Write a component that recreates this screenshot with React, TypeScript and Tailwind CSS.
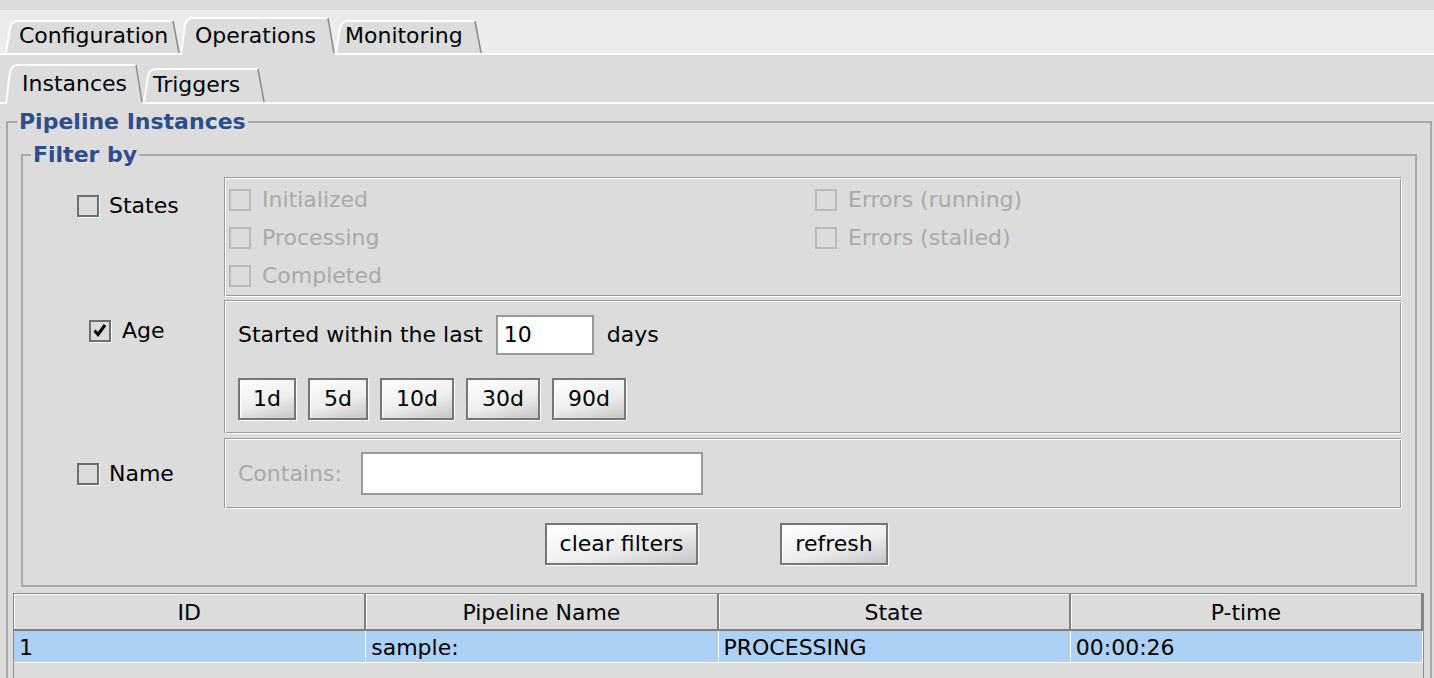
import clsx from 'clsx'

const BOX =
	'border border-t-[#9b9b9b] border-l-[#9b9b9b] border-b-white border-r-white shadow-[inset_1px_1px_0_#fff,inset_-1px_-1px_0_#9b9b9b]'

function Tab({
	label,
	w,
	h,
	selected,
	className,
}: {
	label: string
	w: number
	h: number
	selected?: boolean
	className: string
}) {
	return (
		<div className={clsx('relative flex shrink-0 items-center', selected && 'z-10 -mb-[2px]', className)}>
			<svg className="absolute inset-0 h-full w-full" viewBox={`0 0 ${w} ${h}`} preserveAspectRatio="none">
				<path d={`M0 ${h} L5 9 Q7 2 13 2 L${w - 7} 2 L${w} ${h} Z`} fill="#dcdcdc" />
				<path d={`M1 ${h} L5 9 Q7 2 13 2 L${w - 7} 2`} fill="none" stroke="#fff" strokeWidth="2" />
				<path d={`M${w - 7} 2 L${w - 1} ${selected ? h - 2 : h}`} fill="none" stroke="#8a8a8a" strokeWidth="1.5" />
			</svg>
			<span className="relative">{label}</span>
		</div>
	)
}

function Check({ checked, disabled }: { checked?: boolean; disabled?: boolean }) {
	return (
		<span
			className={clsx(
				'relative inline-block h-[22px] w-[22px] shrink-0 border-2',
				disabled ? 'border-[#b9b9b9]' : 'border-[#6e6e6e] shadow-[1px_1px_0_#fff]',
			)}
		>
			{checked && (
				<svg className="absolute inset-0 h-full w-full" viewBox="0 0 18 18">
					<path d="M3.5 8.5 L7 12.5 L14 3" fill="none" stroke="#000" strokeWidth="3" strokeLinejoin="miter" />
				</svg>
			)}
		</span>
	)
}

function Option({ label }: { label: string }) {
	return (
		<div className="flex h-[38px] items-center gap-[11px] text-[#a9a9a9]">
			<Check disabled />
			<span>{label}</span>
		</div>
	)
}

function Btn({ label, className }: { label: string; className: string }) {
	return (
		<button
			className={clsx(
				'flex h-[42px] items-center justify-center border-2 border-[#767676] bg-[linear-gradient(165deg,#ffffff_0%,#eeeeee_55%,#c6c6c6_100%)] shadow-[1px_1px_0_#fff,inset_1px_1px_0_#fff] text-black',
				className,
			)}
		>
			{label}
		</button>
	)
}

function Field({ value, className }: { value?: string; className: string }) {
	return (
		<div className={clsx('flex items-center border-2 border-[#9a9a9a] bg-white pl-[6px]', className)}>{value}</div>
	)
}

const columns = ['ID', 'Pipeline Name', 'State', 'P-time']
const rows = [['1', 'sample:', 'PROCESSING', '00:00:26']]

export default function App() {
	return (
		<div className="flex h-[678px] w-[1434px] flex-col overflow-hidden bg-[#dcdcdc] font-['DejaVu_Sans',sans-serif] text-[22px] leading-[26px] text-black">
			<div className="h-[10px] shrink-0" />
			{/* top level tabs */}
			<div className="flex h-[45px] shrink-0 items-end border-b-2 border-white bg-[#ececec] pl-[5px]">
				<Tab label="Configuration" w={175} h={34} className="h-[34px] w-[175px] pl-[14px]" />
				<Tab label="Operations" w={155} h={39} selected className="h-[39px] w-[155px] pl-[15px]" />
				<Tab label="Monitoring" w={147} h={34} className="h-[34px] w-[147px] pl-[10px]" />
			</div>
			{/* sub tabs */}
			<div className="flex h-[49px] shrink-0 items-end border-b-2 border-white pl-[5px]">
				<Tab label="Instances" w={138} h={41} selected className="h-[41px] w-[138px] pl-[17px]" />
				<Tab label="Triggers" w={122} h={35} className="h-[35px] w-[122px] pl-[10px]" />
			</div>

			<fieldset className="mt-[5px] mr-[2px] ml-[6px] h-[640px] shrink-0 border-2 border-[#a8a8a8]">
				<legend className="ml-[9px] px-[2px] font-bold text-[#2d4d8c]">Pipeline Instances</legend>

				<fieldset className="mx-[13px] mt-[7px] border-2 border-[#a8a8a8] pr-[13px] pb-[20px]">
					<legend className="ml-[8px] px-[2px] font-bold text-[#2d4d8c]">Filter by</legend>

					{/* states */}
					<div className="mt-[9px] flex">
						<div className="flex w-[201px] shrink-0 items-start pt-[16px] pl-[54px]">
							<div className="flex items-center gap-[10px]">
								<Check />
								<span>States</span>
							</div>
						</div>
						<div className={clsx('grid h-[120px] flex-1 grid-cols-[586px_1fr] pt-[3px] pl-[4px]', BOX)}>
							<div>
								<Option label="Initialized" />
								<Option label="Processing" />
								<Option label="Completed" />
							</div>
							<div>
								<Option label="Errors (running)" />
								<Option label="Errors (stalled)" />
							</div>
						</div>
					</div>

					{/* age */}
					<div className="mt-[3px] flex">
						<div className="flex w-[201px] shrink-0 items-start pt-[18px] pl-[66px]">
							<div className="flex items-center gap-[11px]">
								<Check checked />
								<span>Age</span>
							</div>
						</div>
						<div className={clsx('flex h-[134px] flex-1 flex-col pt-[14px] pl-[13px]', BOX)}>
							<div className="flex items-center">
								<span>Started within the last</span>
								<Field value="10" className="ml-[13px] h-[40px] w-[98px]" />
								<span className="ml-[13px]">days</span>
							</div>
							<div className="mt-[23px] flex gap-[12px]">
								<Btn label="1d" className="w-[58px]" />
								<Btn label="5d" className="w-[60px]" />
								<Btn label="10d" className="w-[74px]" />
								<Btn label="30d" className="w-[74px]" />
								<Btn label="90d" className="w-[74px]" />
							</div>
						</div>
					</div>

					{/* name */}
					<div className="mt-[4px] flex">
						<div className="flex w-[201px] shrink-0 items-center pl-[54px]">
							<div className="flex items-center gap-[10px]">
								<Check />
								<span>Name</span>
							</div>
						</div>
						<div className={clsx('flex h-[71px] flex-1 items-center pl-[13px]', BOX)}>
							<span className="text-[#a9a9a9]">Contains:</span>
							<Field className="ml-[19px] h-[43px] w-[342px]" />
						</div>
					</div>

					<div className="mt-[14px] flex justify-center gap-[82px] pl-[8px]">
						<Btn label="clear filters" className="w-[153px]" />
						<Btn label="refresh" className="w-[108px]" />
					</div>
				</fieldset>

				{/* instances table */}
				<div className="mt-[6px] mr-[6px] ml-[5px] h-[200px] border border-[#8a8a8a]">
					<div className="grid grid-cols-4">
						{columns.map(col => (
							<div
								key={col}
								className="flex h-[37px] items-center justify-center border-r-2 border-b-2 border-[#7f7f7f] pt-[3px] shadow-[inset_1px_1px_0_#fff]"
							>
								{col}
							</div>
						))}
					</div>
					{rows.map(row => (
						<div key={row[0]} className="grid grid-cols-4 border-b border-white bg-[#acd1f5]">
							{row.map((cell, i) => (
								<div key={i} className="flex h-[31px] items-center border-r border-white pt-[2px] pl-[5px]">
									{cell}
								</div>
							))}
						</div>
					))}
				</div>
			</fieldset>
		</div>
	)
}
